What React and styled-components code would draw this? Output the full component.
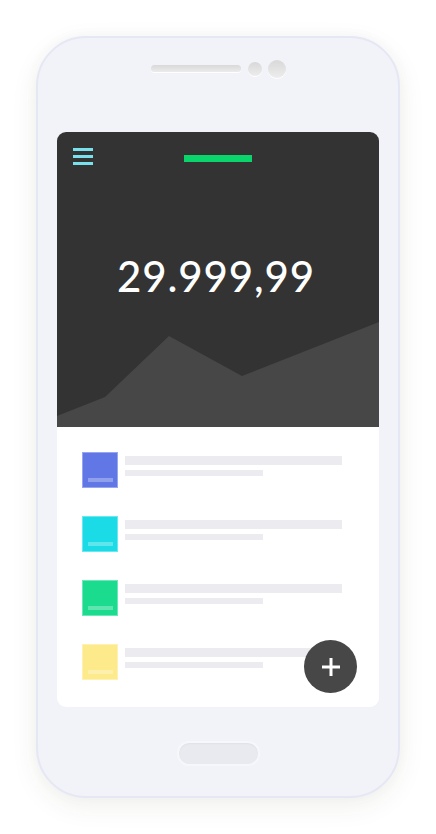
import React from "react";
import styled, { createGlobalStyle } from "styled-components";

const Global = createGlobalStyle`
  html, body { margin: 0; padding: 0; background: #ffffff; }
  body { font-family: Lato, "Liberation Sans", sans-serif; }
  * { box-sizing: border-box; }
`;

const Page = styled.div`
  width: 436px;
  height: 834px;
  padding: 36px 36px 0 36px;
  display: flex;
  flex-direction: column;
  align-items: flex-start;
`;

const Phone = styled.div`
  width: 364px;
  height: 762px;
  border: 2px solid #e5e7f4;
  border-radius: 50px;
  background: #f2f3f8;
  box-shadow: 0 8px 28px rgba(60, 50, 30, 0.07), 0 0 14px rgba(0, 0, 0, 0.03);
  display: flex;
  flex-direction: column;
  align-items: center;
  padding: 21px 19px 0 19px;
`;

const TopBar = styled.div`
  display: flex;
  align-items: center;
  gap: 6px;
  height: 19px;
`;

const Speaker = styled.div`
  width: 90px;
  height: 7px;
  border-radius: 4px;
  background: linear-gradient(#d9d9d9, #ebebeb);
  box-shadow: 0 1px 0 #ffffff;
  margin-right: 1px;
`;

const Lens = styled.div`
  width: ${(p) => p.$size}px;
  height: ${(p) => p.$size}px;
  border-radius: 50%;
  background: linear-gradient(#d8d8d8, #ededed);
  box-shadow: 0 1px 0 #ffffff;
`;

const Screen = styled.div`
  position: relative;
  margin-top: 54px;
  width: 322px;
  height: 575px;
  border-radius: 9px;
  overflow: hidden;
  background: #ffffff;
  display: flex;
  flex-direction: column;
`;

const Header = styled.div`
  height: 295px;
  background: #333333;
  display: flex;
  flex-direction: column;
`;

const Toolbar = styled.div`
  display: grid;
  grid-template-columns: 1fr auto 1fr;
  align-items: start;
  padding: 16px 16px 0 16px;
`;

const Burger = styled.div`
  display: flex;
  flex-direction: column;
  gap: 4px;
  width: 20px;
`;

const BurgerLine = styled.div`
  height: 3px;
  background: #78e1ec;
`;

const Accent = styled.div`
  width: 68px;
  height: 7px;
  margin-top: 7px;
  background: #0ad46c;
`;

const Amount = styled.div`
  margin-top: 90px;
  text-align: center;
  color: #ffffff;
  font-family: Lato, "Liberation Sans", sans-serif;
  font-size: 42px;
  font-weight: 500;
  line-height: 42px;
  letter-spacing: 0.9px;
  padding-right: 4px;
`;

const Chart = styled.svg`
  display: block;
  margin-top: auto;
  width: 322px;
  height: 105px;
`;

const List = styled.div`
  display: flex;
  flex-direction: column;
  gap: 28px;
  padding: 25px 0 0 25px;
`;

const Row = styled.div`
  display: flex;
  gap: 7px;
`;

const Thumb = styled.div`
  width: 36px;
  height: 36px;
  background: ${(p) => p.$color};
  border: 1px solid rgba(255, 255, 255, 0.35);
  display: flex;
  align-items: flex-end;
  justify-content: center;
  padding-bottom: 5px;
`;

const ThumbBar = styled.div`
  width: 25px;
  height: 4px;
  background: rgba(255, 255, 255, 0.3);
`;

const Lines = styled.div`
  display: flex;
  flex-direction: column;
  gap: 5px;
  padding-top: 4px;
`;

const Line = styled.div`
  width: ${(p) => p.$w}px;
  height: ${(p) => p.$h}px;
  background: #ececf0;
`;

const Fab = styled.div`
  position: absolute;
  right: 22px;
  bottom: 14px;
  width: 53px;
  height: 53px;
  border-radius: 50%;
  background: #474747;
  display: flex;
  align-items: center;
  justify-content: center;
`;

const HomeButton = styled.div`
  margin-top: 34px;
  width: 83px;
  height: 25px;
  border-radius: 12px;
  background: #e9eaf0;
  border: 2px solid #f6f7fb;
  box-shadow: inset 0 1px 2px rgba(0, 0, 0, 0.04);
  margin-left: 1px;
`;

const items = ["#6177e6", "#1bdbe6", "#1bdc8e", "#fdea8b"];

export default function App() {
  return (
    <>
      <Global />
      <Page>
        <Phone>
          <TopBar>
            <Speaker />
            <Lens $size={14} />
            <Lens $size={18} />
          </TopBar>
          <Screen>
            <Header>
              <Toolbar>
                <Burger>
                  <BurgerLine />
                  <BurgerLine />
                  <BurgerLine />
                </Burger>
                <Accent />
                <div />
              </Toolbar>
              <Amount>29.999,99</Amount>
              <Chart viewBox="0 0 322 105" preserveAspectRatio="none">
                <polygon
                  points="0,94 48,75 112,14 185,54 322,0 322,105 0,105"
                  fill="#474747"
                />
              </Chart>
            </Header>
            <List>
              {items.map((c) => (
                <Row key={c}>
                  <Thumb $color={c}>
                    <ThumbBar />
                  </Thumb>
                  <Lines>
                    <Line $w={217} $h={9} />
                    <Line $w={138} $h={6} />
                  </Lines>
                </Row>
              ))}
            </List>
            <Fab>
              <svg width="18" height="18" viewBox="0 0 18 18">
                <rect x="7.5" y="0" width="3" height="18" fill="#ffffff" />
                <rect x="0" y="7.5" width="18" height="3" fill="#ffffff" />
              </svg>
            </Fab>
          </Screen>
          <HomeButton />
        </Phone>
      </Page>
    </>
  );
}
